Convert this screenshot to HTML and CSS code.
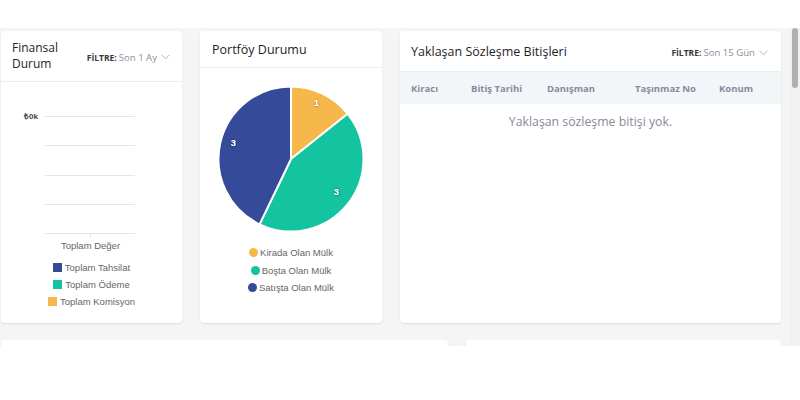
FILE: index.html
```html
<!DOCTYPE html>
<html lang="tr">
<head>
<meta charset="utf-8">
<title>Dashboard</title>
<link rel="stylesheet" href="styles.css">
</head>
<body>
<div class="top"></div>
<div class="frame">
  <div class="page">
    <div class="row1">
      <section class="card fin">
        <header class="card-head head-fin">
          <h2 class="title"><span class="tl">Finansal</span><span class="tl">Durum</span></h2>
          <div class="filter"><b>FİLTRE:</b><span>Son 1 Ay</span><svg class="chev" width="9" height="6" viewBox="0 0 9 6"><path d="M0.5 0.8 L4.5 4.8 L8.5 0.8" fill="none" stroke="#adb5bd" stroke-width="1"/></svg></div>
        </header>
        <div class="fin-body">
          <svg class="axes" width="181" height="158" viewBox="0 0 181 158">
            <text x="37" y="37" text-anchor="end" class="ytick">₺0k</text>
            <g stroke="#e5e5e5" stroke-width="1">
              <line x1="44" y1="34.5" x2="134" y2="34.5"/>
              <line x1="44" y1="63.5" x2="134" y2="63.5"/>
              <line x1="44" y1="93.5" x2="134" y2="93.5"/>
              <line x1="44" y1="122.5" x2="134" y2="122.5"/>
              <line x1="44" y1="151.5" x2="134" y2="151.5"/>
              <line x1="89.5" y1="151" x2="89.5" y2="156"/>
            </g>
          </svg>
          <div class="xlabel">Toplam Değer</div>
          <ul class="legend">
            <li><i class="sq blue"></i>Toplam Tahsilat</li>
            <li><i class="sq teal"></i>Toplam Ödeme</li>
            <li><i class="sq yellow"></i>Toplam Komisyon</li>
          </ul>
        </div>
      </section>

      <section class="card port">
        <header class="card-head head-port">
          <h2 class="title">Portföy Durumu</h2>
        </header>
        <div class="port-body">
          <svg class="pie" width="150" height="150" viewBox="0 0 150 150">
            <defs>
              <filter id="sh" x="-50%" y="-50%" width="200%" height="200%">
                <feDropShadow dx="0" dy="0" stdDeviation="0.8" flood-color="#000" flood-opacity="0.6"/>
              </filter>
            </defs>
            <g stroke="#fff" stroke-width="2" stroke-linejoin="round">
              <path d="M75 75 L75 2.5 A72.5 72.5 0 0 1 131.68 29.8 Z" fill="#f7b84b"/>
              <path d="M75 75 L131.68 29.8 A72.5 72.5 0 0 1 43.54 140.32 Z" fill="#14c39f"/>
              <path d="M75 75 L43.54 140.32 A72.5 72.5 0 0 1 75 2.5 Z" fill="#354b9a"/>
            </g>
            <g class="plabel" filter="url(#sh)">
              <text x="100.5" y="21.5" text-anchor="middle">1</text>
              <text x="120.5" y="110.5" text-anchor="middle">3</text>
              <text x="17.5" y="61.5" text-anchor="middle">3</text>
            </g>
          </svg>
          <ul class="legend plegend">
            <li><i class="dot yellow"></i>Kirada Olan Mülk</li>
            <li><i class="dot teal"></i>Boşta Olan Mülk</li>
            <li><i class="dot blue"></i>Satışta Olan Mülk</li>
          </ul>
        </div>
      </section>

      <section class="card contracts">
        <header class="card-head head-con">
          <h2 class="title">Yaklaşan Sözleşme Bitişleri</h2>
          <div class="filter"><b>FİLTRE:</b><span>Son 15 Gün</span><svg class="chev" width="9" height="6" viewBox="0 0 9 6"><path d="M0.5 0.8 L4.5 4.8 L8.5 0.8" fill="none" stroke="#adb5bd" stroke-width="1"/></svg></div>
        </header>
        <div class="thead">
          <span class="c1">Kiracı</span>
          <span class="c2">Bitiş Tarihi</span>
          <span class="c3">Danışman</span>
          <span class="c4">Taşınmaz No</span>
          <span class="c5">Konum</span>
        </div>
        <p class="empty">Yaklaşan sözleşme bitişi yok.</p>
      </section>
    </div>
    <div class="row2">
      <section class="card"></section>
      <section class="card"></section>
    </div>
  </div>
  <div class="scroll"><div class="thumb"></div></div>
</div>
</body>
</html>
```
FILE: styles.css
```css
* { box-sizing: border-box; }
html, body { margin: 0; padding: 0; background: #fff; }
body {
  width: 800px;
  height: 400px;
  overflow: hidden;
  font-family: "Open Sans", "DejaVu Sans", sans-serif;
  color: #212529;
}
.top { height: 28px; background: #fff; }
.frame {
  display: flex;
  height: 318px;
  background: #f5f5f5;
}
.page {
  flex: 1;
  overflow: hidden;
  padding: 3px 0 0 1px;
}
.scroll {
  width: 10px;
  background: #f1f1f1;
  padding: 0 2px 0 2px;
}
.thumb {
  height: 60px;
  background: #b0b0b0;
  border-radius: 3px;
}
.row1 {
  display: grid;
  grid-template-columns: 181px 182px 381px;
  column-gap: 18px;
  height: 292px;
}
.row2 {
  display: grid;
  grid-template-columns: 447px 315px;
  column-gap: 18px;
  margin-top: 17px;
  height: 60px;
}
.card {
  background: #fff;
  border-radius: 4px;
  box-shadow: 0 1px 2px rgba(56, 65, 74, 0.12);
  overflow: hidden;
}
.card-head {
  display: flex;
  align-items: center;
  justify-content: space-between;
  border-bottom: 1px solid #eceef0;
}
.title {
  margin: 0;
  font-size: 12.5px;
  font-weight: 500;
  line-height: 15px;
  color: #1f2328;
}
.fin .title { font-size: 12px; }
.tl { display: block; height: 16px; line-height: 16px; }
.head-fin { height: 51px; padding: 0 12px 0 11px; }
.head-fin .filter { margin-top: 2px; }
.head-port { height: 37px; padding: 0 12px; }
.head-con { height: 41px; padding: 0 13px 0 11px; }
.head-con .filter { margin-top: 3px; }
.filter {
  display: flex;
  align-items: center;
  font-size: 9.6px;
  white-space: nowrap;
}
.filter b { font-weight: 700; color: #343a40; font-size: 8.5px; margin-right: 2px; }
.filter span { color: #8a8f9c; }
.chev { margin-left: 4px; }

/* finansal chart */
.fin-body {
  display: flex;
  flex-direction: column;
  align-items: center;
}
.axes { display: block; align-self: flex-start; }
.ytick { font-family: "Liberation Sans", Arial, sans-serif; font-size: 8px; font-weight: 700; fill: #444; }
.xlabel {
  font-family: "Liberation Sans", Arial, sans-serif;
  font-size: 9.5px;
  color: #666;
  line-height: 12px;
  margin-left: -2px;
}
.legend {
  list-style: none;
  margin: 7px 0 0;
  padding: 0;
  display: flex;
  flex-direction: column;
  align-items: center;
  font-family: "Liberation Sans", Arial, sans-serif;
  font-size: 9.5px;
  color: #666;
}
.legend li {
  display: flex;
  align-items: center;
  height: 17px;
  white-space: nowrap;
}
.sq { display: inline-block; width: 9px; height: 9px; margin-right: 3px; }
.dot { display: inline-block; width: 9px; height: 9px; border-radius: 50%; margin-right: 2px; }
.blue { background: #354b9a; }
.teal { background: #14c39f; }
.yellow { background: #f7b84b; }

/* portföy */
.port-body {
  display: flex;
  flex-direction: column;
  align-items: center;
  padding-top: 16px;
}
.pie { display: block; }
.plabel text {
  font-family: "Liberation Sans", Arial, sans-serif;
  font-size: 9.5px;
  font-weight: 700;
  fill: #fff;
}
.plegend { margin-top: 10px; }
.plegend li { height: 17.5px; }

/* contracts */
.thead {
  display: flex;
  align-items: center;
  height: 32px;
  background: #f3f6f9;
  padding-left: 11px;
  font-size: 9.5px;
  font-weight: 700;
  color: #878a99;
  white-space: nowrap;
}
.c1 { width: 60px; }
.c2 { width: 76px; }
.c3 { width: 88px; }
.c4 { width: 84px; }
.empty {
  margin: 10px 0 0;
  text-align: center;
  font-size: 12.3px;
  color: #878a99;
  line-height: 16px;
}
```
